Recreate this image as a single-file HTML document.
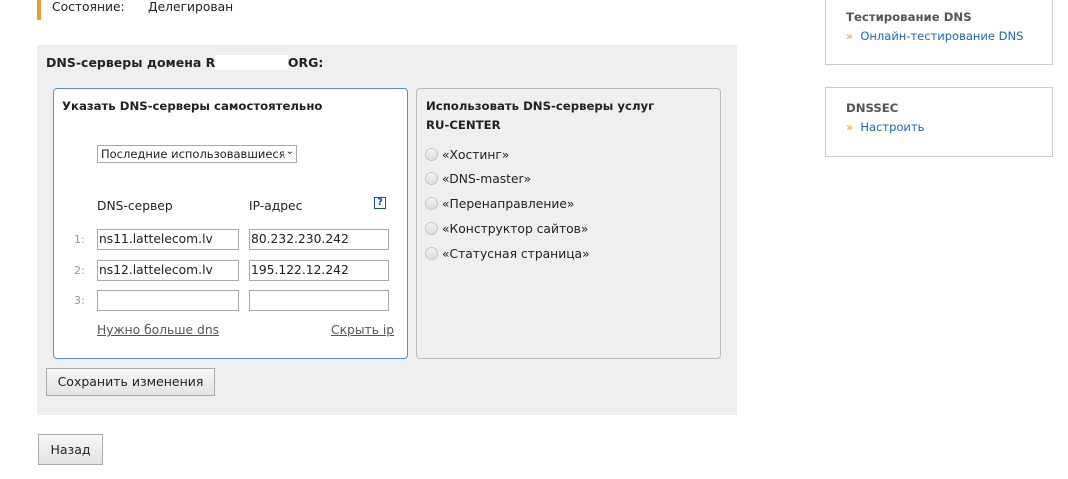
<!DOCTYPE html>
<html><head><meta charset="utf-8"><style>
*{margin:0;padding:0;box-sizing:border-box}
body{width:1068px;height:479px;background:#fff;font-family:"DejaVu Sans","Liberation Sans",sans-serif;font-size:12.3px;color:#222;position:relative;overflow:hidden}
.a{position:absolute;white-space:nowrap}
.b{font-weight:bold;font-size:11.7px}
.inp{position:absolute;height:21px;border:1px solid #aaa;background:#fff;padding:2px 1px;font-size:12.3px;line-height:15px}
.rad{position:absolute;width:13px;height:13px;border-radius:50%;border:1px solid #c4c4c4;background:linear-gradient(#f4f4f4,#ddd)}
.btn{position:absolute;border:1px solid #aaa;background:linear-gradient(#f6f6f6,#e4e4e4);font-size:12.5px;text-align:center}
.lk{color:#555;text-decoration:underline}
</style></head><body>
<div class="a" style="left:37px;top:0;width:4px;height:20px;background:#f49a27"></div>
<div class="a" style="left:52px;top:0;">Состояние:</div>
<div class="a" style="left:148px;top:0;">Делегирован</div>

<div class="a" style="left:37px;top:45px;width:700px;height:370px;background:#efefef"></div>
<div class="a b" style="left:46px;top:55px;font-size:12.5px">DNS-серверы домена R<span style="color:#fff;background:#fff">ххххххххх</span>ORG:</div>

<div class="a" style="left:53px;top:88px;width:355px;height:271px;background:#fff;border:1px solid #5b8fd0;border-radius:4px"></div>
<div class="a b" style="left:62px;top:99px">Указать DNS-серверы самостоятельно</div>
<div class="a" style="left:97px;top:145px;width:200px;height:18px;border:1px solid #aaa;background:#fff;padding:1px 3px;font-size:11.5px;overflow:hidden">Последние использовавшиеся<span style="position:absolute;right:2px;top:0;font-size:10px;background:#fff;padding-left:2px">&#8964;</span></div>
<div class="a" style="left:97px;top:199px">DNS-сервер</div>
<div class="a" style="left:249px;top:199px">IP-адрес</div>
<div class="a" style="left:374px;top:197px;width:12px;height:12px;border:1px solid #1a4f8a;font-size:10px;line-height:10px;text-align:center;font-weight:bold;color:#1a4f8a">?</div>
<div class="a" style="left:74px;top:233px;color:#999;font-size:11px">1:</div>
<div class="a" style="left:74px;top:264px;color:#999;font-size:11px">2:</div>
<div class="a" style="left:74px;top:294px;color:#999;font-size:11px">3:</div>
<div class="inp" style="left:97px;top:229px;width:142px">ns11.lattelecom.lv</div>
<div class="inp" style="left:249px;top:229px;width:140px">80.232.230.242</div>
<div class="inp" style="left:97px;top:260px;width:142px">ns12.lattelecom.lv</div>
<div class="inp" style="left:249px;top:260px;width:140px">195.122.12.242</div>
<div class="inp" style="left:97px;top:290px;width:142px"></div>
<div class="inp" style="left:249px;top:290px;width:140px"></div>
<div class="a lk" style="left:97px;top:323px">Нужно больше dns</div>
<div class="a lk" style="left:331px;top:323px">Скрыть ip</div>

<div class="a" style="left:416px;top:88px;width:305px;height:271px;border:1px solid #bbb;border-radius:4px"></div>
<div class="a b" style="left:426px;top:99px">Использовать DNS-серверы услуг</div>
<div class="a b" style="left:426px;top:118px">RU-CENTER</div>
<div class="rad" style="left:425px;top:148px"></div><div class="a" style="left:442px;top:148px">«Хостинг»</div>
<div class="rad" style="left:425px;top:172px"></div><div class="a" style="left:442px;top:172px">«DNS-master»</div>
<div class="rad" style="left:425px;top:197px"></div><div class="a" style="left:442px;top:197px">«Перенаправление»</div>
<div class="rad" style="left:425px;top:222px"></div><div class="a" style="left:442px;top:222px">«Конструктор сайтов»</div>
<div class="rad" style="left:425px;top:247px"></div><div class="a" style="left:442px;top:247px">«Статусная страница»</div>

<div class="btn" style="left:46px;top:368px;width:169px;height:28px;line-height:26px">Сохранить изменения</div>
<div class="btn" style="left:38px;top:434px;width:65px;height:31px;line-height:29px">Назад</div>

<div class="a" style="left:825px;top:-2px;width:228px;height:67px;border:1px solid #ccc"></div>
<div class="a b" style="left:846px;top:10px;color:#555">Тестирование DNS</div>
<div class="a" style="left:846px;top:29px;font-size:11.5px"><span style="color:#f49a27">»</span>&nbsp; <span style="color:#1a66c0">Онлайн-тестирование DNS</span></div>
<div class="a" style="left:825px;top:87px;width:228px;height:70px;border:1px solid #ccc"></div>
<div class="a b" style="left:846px;top:101px;color:#555">DNSSEC</div>
<div class="a" style="left:846px;top:120px;font-size:11.5px"><span style="color:#f49a27">»</span>&nbsp; <span style="color:#1a66c0">Настроить</span></div>
</body></html>
